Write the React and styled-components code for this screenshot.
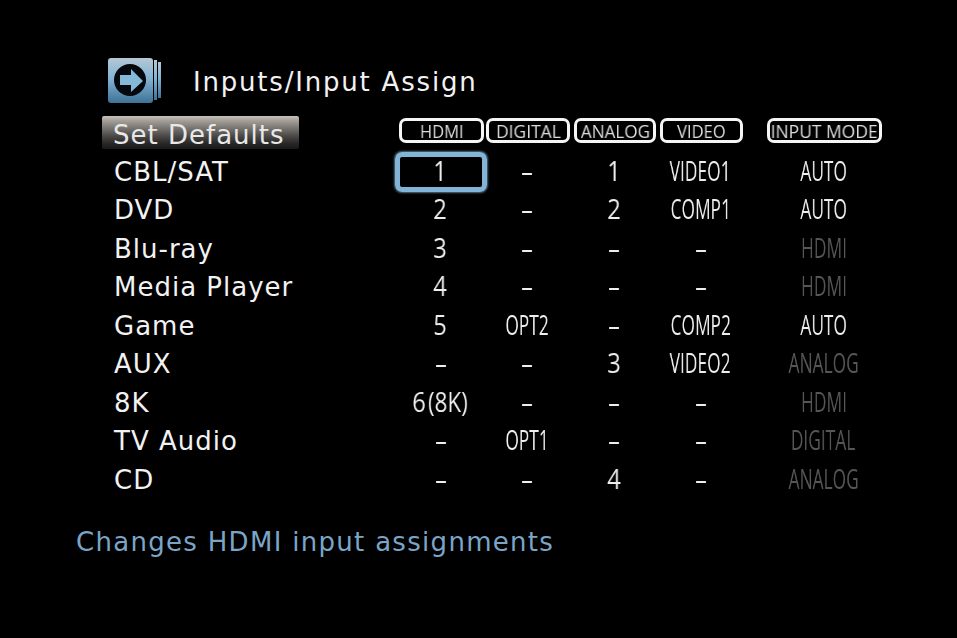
import React from 'react'
import styled, {createGlobalStyle} from 'styled-components'

const GlobalStyle = createGlobalStyle`
html,body{margin:0;padding:0;background:#000;}
`
// label, hdmi, spacer, digital, spacer, analog, spacer, video, spacer, mode
const COLS = '297px 85px 2px 84px 4px 82px 4px 83px 24px 115px'
const rows = [
  {name:'CBL/SAT',hdmi:'1',digital:'–',analog:'1',video:'VIDEO1',mode:'AUTO',selected:true},
  {name:'DVD',hdmi:'2',digital:'–',analog:'2',video:'COMP1',mode:'AUTO'},
  {name:'Blu-ray',hdmi:'3',digital:'–',analog:'–',video:'–',mode:'HDMI',dim:true},
  {name:'Media Player',hdmi:'4',digital:'–',analog:'–',video:'–',mode:'HDMI',dim:true},
  {name:'Game',hdmi:'5',digital:'OPT2',analog:'–',video:'COMP2',mode:'AUTO'},
  {name:'AUX',hdmi:'–',digital:'–',analog:'3',video:'VIDEO2',mode:'ANALOG',dim:true},
  {name:'8K',hdmi:'6',note:'(8K)',digital:'–',analog:'–',video:'–',mode:'HDMI',dim:true},
  {name:'TV Audio',hdmi:'–',digital:'OPT1',analog:'–',video:'–',mode:'DIGITAL',dim:true},
  {name:'CD',hdmi:'–',digital:'–',analog:'4',video:'–',mode:'ANALOG',dim:true},
]

const Screen = styled.div`
width:957px;height:638px;overflow:hidden;background:#000;color:#f2f2f2;
font-family:"DejaVu Sans","Open Sans",sans-serif;
display:flex;flex-direction:column;
`
const Header = styled.header`
display:flex;align-items:center;gap:32px;
padding:58px 0 0 108px;height:45px;
`
const Title = styled.h1`
margin:0;padding-top:3px;font-size:26px;font-weight:400;letter-spacing:1.8px;line-height:45px;
`
const Table = styled.div`
padding:13px 0 0 102px;display:flex;flex-direction:column;
`
const HeadRow = styled.div`
display:grid;grid-template-columns:${COLS};height:33px;margin-bottom:2.5px;
`
const Row = styled.div`
display:grid;grid-template-columns:${COLS};height:38.5px;align-items:center;
`
const DefaultsButton = styled.div`
width:197px;height:33px;box-sizing:border-box;padding-left:11px;border-radius:2px;
background:linear-gradient(#c8c3bb 0,#a8a39c 12%,#7c7874 35%,#4c4a48 60%,#262524 85%,#1a1a1a 100%);
font-size:26px;letter-spacing:1px;line-height:38px;color:#e8e8e8;white-space:nowrap;
`
const ColHead = styled.div`
grid-column:${p=>p.$col};
margin-top:2px;height:25px;box-sizing:border-box;border:3px solid #f5f5f5;border-radius:7px;
display:flex;align-items:center;justify-content:center;overflow:hidden;
font-family:"Open Sans",sans-serif;font-size:18px;color:#dcdcdc;
`
const Squeeze = styled.span`
display:inline-block;white-space:nowrap;will-change:transform;transform:scaleX(${p=>p.$x});
`
const Name = styled.div`
padding-left:12px;font-size:26px;letter-spacing:1px;line-height:38px;
`
const Cell = styled.div`
grid-column:${p=>p.$col};
position:relative;box-sizing:border-box;height:40px;padding:0 2px 4px 0;
display:flex;justify-content:center;
font-family:"Open Sans",sans-serif;font-size:28px;line-height:36px;
color:${p=>p.$dim?'#565656':'#eeeeee'};
`
const Focus = styled.div`
position:absolute;left:-4px;right:-3px;top:0;bottom:0;box-sizing:border-box;
border:5px solid #82b4d8;border-radius:7px;box-shadow:0 0 2px 1px #566a78;
`
const Note = styled.span`
display:inline-block;margin:0 -2px 0 -4px;will-change:transform;transform:scaleX(0.8);
`
const Hint = styled.p`
margin:0;padding:25px 0 0 76px;font-size:26px;letter-spacing:1.3px;line-height:38px;color:#7ba5c7;
`

const MenuIcon = () => (
  <svg width="53" height="45" viewBox="0 0 53 45">
    <defs>
      <linearGradient id="face" x1="0" y1="0" x2="0" y2="1">
        <stop offset="0" stopColor="#b5c8d4"/>
        <stop offset="0.45" stopColor="#82b4d5"/>
        <stop offset="1" stopColor="#3e7296"/>
      </linearGradient>
    </defs>
    <rect x="50" y="4" width="3" height="36" fill="url(#face)"/>
    <rect x="46" y="2" width="3" height="40" fill="url(#face)"/>
    <rect x="0" y="0" width="45" height="45" rx="3" fill="url(#face)"/>
    <circle cx="22" cy="22" r="16" fill="#05080c"/>
    <path d="M12 17h11V11l12 12-12 11v-7H12z" fill="#86b8d8"/>
  </svg>
)

// single glyphs are only a little narrow, words are squeezed hard
const Value = ({v}) => <Squeeze $x={v.length>1?0.62:0.85}>{v}</Squeeze>

const App = () => (
  <Screen>
    <GlobalStyle/>
    <Header>
      <MenuIcon/>
      <Title>Inputs/Input Assign</Title>
    </Header>
    <Table>
      <HeadRow>
        <DefaultsButton>Set Defaults</DefaultsButton>
        <ColHead $col={2}><Squeeze $x={0.92}>HDMI</Squeeze></ColHead>
        <ColHead $col={4}><Squeeze $x={0.97}>DIGITAL</Squeeze></ColHead>
        <ColHead $col={6}><Squeeze $x={0.95}>ANALOG</Squeeze></ColHead>
        <ColHead $col={8}><Squeeze $x={0.92}>VIDEO</Squeeze></ColHead>
        <ColHead $col={10}><Squeeze $x={0.97}>INPUT MODE</Squeeze></ColHead>
      </HeadRow>
      {rows.map(r=>(
        <Row key={r.name}>
          <Name>{r.name}</Name>
          <Cell $col={2}>
            {r.selected&&<Focus/>}
            <Value v={r.hdmi}/>{r.note&&<Note>{r.note}</Note>}
          </Cell>
          <Cell $col={4}><Value v={r.digital}/></Cell>
          <Cell $col={6}><Value v={r.analog}/></Cell>
          <Cell $col={8}><Value v={r.video}/></Cell>
          <Cell $col={10} $dim={r.dim}><Value v={r.mode}/></Cell>
        </Row>
      ))}
    </Table>
    <Hint>Changes HDMI input assignments</Hint>
  </Screen>
)

export default App
